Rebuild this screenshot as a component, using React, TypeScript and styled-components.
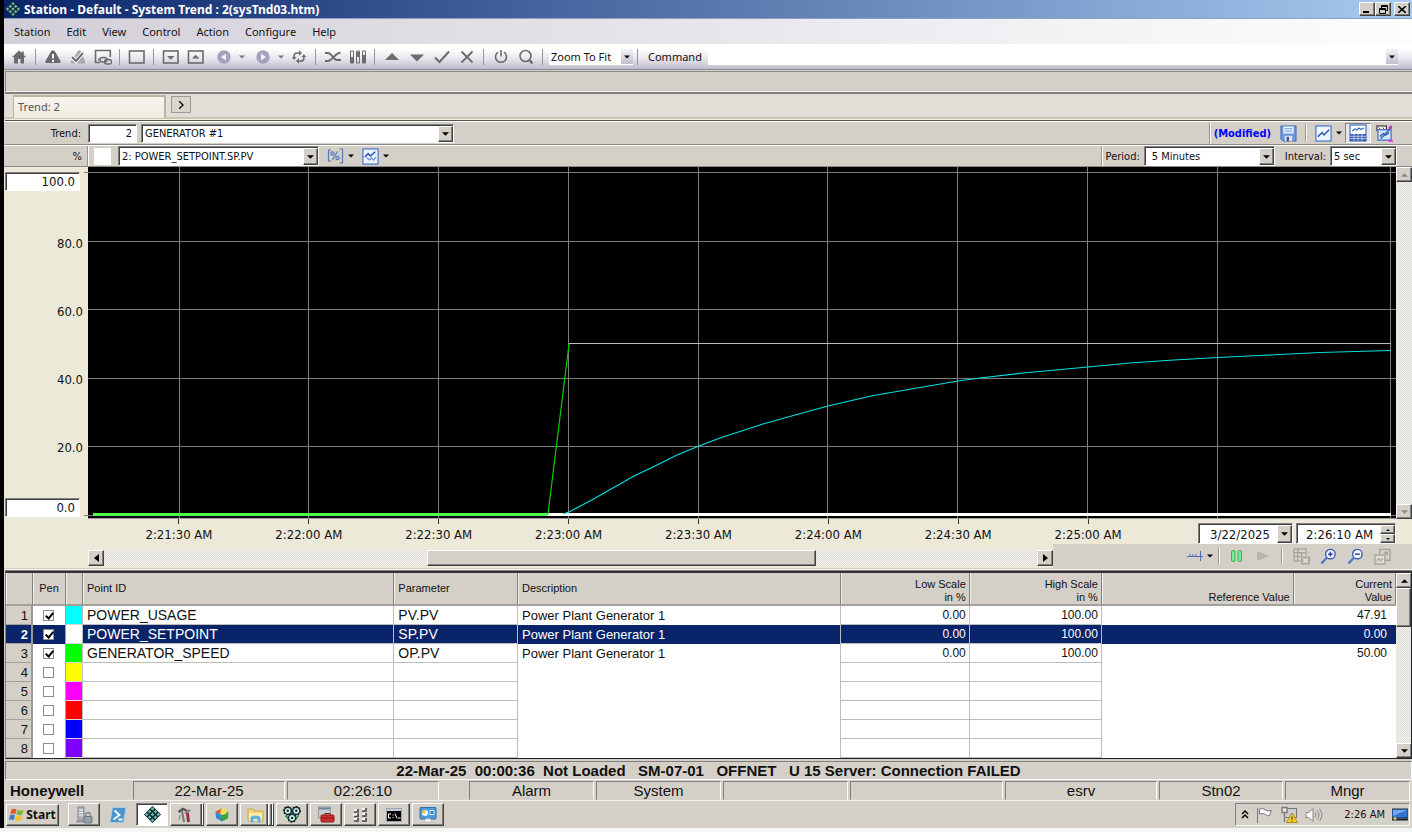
import React from "react";
import styled, { createGlobalStyle, css } from "styled-components";

const UI = `"DejaVu Sans Condensed", "DejaVu Sans", sans-serif`;
const MENU = `"Noto Sans", "Open Sans", sans-serif`;
const GRID = `"Liberation Sans", Arial, sans-serif`;
const FACE = "#d4d0c8";
const CREAM = "#ece9d8";
const NAVY = "#0a246a";

const GlobalStyle = createGlobalStyle`
  * { box-sizing: border-box; }
  body { margin: 0; background: #f6f6f6; color: #111; font: 11px ${UI}; }
  button, input, select { font: inherit; color: inherit; margin: 0; padding: 0; border-radius: 0; }
  button { border: 0; background: none; display: inline-flex; align-items: center; justify-content: center; }
  svg { display: block; flex: none; }
`;

const raised = css`
  background: ${FACE};
  border: 1px solid;
  border-color: #fff #404040 #404040 #fff;
  box-shadow: inset -1px -1px 0 #808080;
`;
const sunken = css`
  background: #fff;
  border: 1px solid;
  border-color: #808080 #fff #fff #808080;
  box-shadow: inset 1px 1px 0 #404040;
`;
const dither = css`
  background: repeating-conic-gradient(#dedad4 0% 25%, #f4f2ee 0% 50%) 0 0 / 2px 2px;
`;

const Screen = styled.div`
  min-height: 100vh;
  border-bottom: 4px solid #f6f6f6;
  display: flex;
  background: #000;
`;
const Frame = styled.div`
  flex: 1;
  min-width: 0;
  margin-left: 4px;
  display: flex;
  flex-direction: column;
  background: ${FACE};
`;

const TitleBar = styled.header`
  height: 19px;
  display: flex;
  align-items: center;
  gap: 3px;
  padding: 0 2px 0 1px;
  background: linear-gradient(90deg, #0a246a, #a6caf0);
  border-bottom: 1px solid #8f9fc4;
  color: #fff;
`;
const Title = styled.h1`
  margin: 0;
  flex: 1;
  font: bold 12px ${MENU};
`;
const WinButton = styled.button<{ $joined?: boolean }>`
  ${raised}
  width: 16px;
  height: 14px;
  margin-left: ${(p) => (p.$joined ? "-3px" : "0")};
`;

const MenuBar = styled.nav`
  height: 25px;
  display: flex;
  align-items: center;
  gap: 16px;
  padding: 0 10px;
  background: linear-gradient(90deg, #d3cfd9, #fdfdfe);
  font: 11px ${MENU};
`;

const ToolBar = styled.div`
  height: 26px;
  display: flex;
  align-items: center;
  padding: 0 14px 0 2px;
  background: linear-gradient(#fff 20%, #e6e4ec 60%, #bfbbcb);
  border-bottom: 1px solid #8a8797;
  font: 11px ${MENU};
`;
const ToolButton = styled.button`
  width: 25px;
  height: 22px;
  color: #6b6b6e;
`;
const SplitButton = styled(ToolButton)`
  width: 39px;
  gap: 8px;
  padding-left: 7px;
`;
const ToolSep = styled.span`
  width: 9px;
  height: 16px;
  background: linear-gradient(#96939e, #96939e) center / 1px 100% no-repeat;
`;
const ZoomSelect = styled.span`
  display: flex;
  align-items: center;
  width: 84px;
  height: 16px;
  margin-left: 2px;
  background: #fff;
`;
const SoftArrow = styled.span`
  display: flex;
  align-items: center;
  justify-content: center;
  flex: none;
  width: 12px;
  height: 15px;
  background: linear-gradient(#f4f3f6, #c2becb);
`;
const BareSelect = styled.select<{ $pad?: number }>`
  appearance: none;
  border: 0;
  background: transparent;
  flex: 1;
  min-width: 0;
  height: 100%;
  padding-left: ${(p) => p.$pad ?? 2}px;
`;
const CommandLabel = styled.label`
  margin: 0 6px 0 6px;
`;
const CommandBox = styled.span`
  flex: 1;
  display: flex;
  align-items: center;
  height: 16px;
  background: #fff;
  input { flex: 1; min-width: 0; border: 0; background: transparent; height: 100%; }
`;

const MessageZone = styled.div`
  height: 21px;
  margin: 1px 0 0 1px;
  border: 1px solid #8a8a8a;
  border-right: 0;
  border-bottom: 1px solid #f4f2ee;
`;
const TabStrip = styled.div`
  height: 29px;
  display: flex;
  align-items: center;
  gap: 5px;
  padding: 0 8px;
  margin-left: 1px;
  background: #e1ded7;
  border-top: 2px solid #808080;
  border-bottom: 1px solid #55544f;
  box-shadow: inset 0 -1px 0 #f3f0e2, inset 0 -3px 0 #c9c5b2;
`;
const Tab = styled.button`
  width: 153px;
  height: 23px;
  align-self: flex-end;
  justify-content: flex-start;
  margin-bottom: 2px;
  padding: 0 0 2px 4px;
  border: solid #b9b59f;
  border-width: 2px 2px 0 1px;
  background: linear-gradient(#f7f5ee, #eeebe0);
  color: #555;
  font: 11px ${MENU};
`;
const TabMore = styled.button`
  width: 20px;
  height: 17px;
  margin-bottom: 5px;
  border: 1px solid #9a9a96;
  background: #d9d5cd;
`;

const Bar = styled.div<{ $h: number }>`
  height: ${(p) => p.$h}px;
  display: flex;
  align-items: center;
  border-top: 1px solid #fff;
  border-bottom: 1px solid #8c8a85;
`;
const BarLabel = styled.label<{ $w?: number }>`
  width: ${(p) => (p.$w ? `${p.$w}px` : "auto")};
  text-align: right;
`;
const Sep = styled.span<{ $m?: string }>`
  width: 2px;
  align-self: stretch;
  margin: ${(p) => p.$m ?? "1px 6px"};
  border-left: 1px solid #9a978f;
  border-right: 1px solid #fff;
`;
const Field = styled.input<{ $w: number; $big?: boolean }>`
  ${sunken}
  width: ${(p) => p.$w}px;
  height: 19px;
  padding: 0 4px;
  text-align: right;
  font-size: ${(p) => (p.$big ? 13 : 11)}px;
`;
const Combo = styled.span<{ $w: number; $h?: number }>`
  ${sunken}
  display: flex;
  align-items: center;
  width: ${(p) => p.$w}px;
  height: ${(p) => p.$h ?? 19}px;
  padding: 1px 0 0 1px;
`;
const ArrowBox = styled.span`
  ${raised}
  flex: none;
  display: flex;
  align-items: center;
  justify-content: center;
  width: 15px;
  height: 100%;
`;
const Push = styled.span`
  flex: 1;
`;
const Gap = styled.span<{ $w: number }>`
  flex: none;
  width: ${(p) => p.$w}px;
`;
const Swatch = styled.span`
  width: 17px;
  height: 17px;
  margin: 0 7px 0 5px;
  background: #fff;
`;
const IconButton = styled.button<{ $w?: number; $on?: boolean }>`
  width: ${(p) => p.$w ?? 26}px;
  height: 20px;
  gap: 4px;
  ${(p) =>
    p.$on &&
    css`
      ${dither}
      border: 1px solid;
      border-color: #808080 #fff #fff #808080;
    `}
`;
const Modified = styled.strong`
  margin-right: 4px;
  color: #00f;
`;

const ChartArea = styled.section`
  flex: 1;
  min-height: 352px;
  display: flex;
  background: ${CREAM};
`;
const YAxis = styled.div`
  width: 84px;
  display: flex;
  flex-direction: column;
  padding-left: 1px;
  font-size: 13px;
`;
const YLabel = styled.div`
  flex: 1;
  display: flex;
  align-items: center;
  justify-content: flex-end;
  padding-right: 5px;
`;
const YEnd = styled.div<{ $bottom?: boolean }>`
  height: ${(p) => (p.$bottom ? 37 : 42)}px;
  display: flex;
  padding: ${(p) => (p.$bottom ? "0 0 2px" : "5px 0 0")};
  align-items: ${(p) => (p.$bottom ? "flex-end" : "flex-start")};
`;
const Plot = styled.svg`
  flex: 1;
  min-width: 0;
  height: auto;
  background: #000;
  overflow: visible;
`;
const VScroll = styled.div`
  width: 16px;
  display: flex;
  flex-direction: column;
  justify-content: space-between;
  ${dither}
`;
const ScrollButton = styled.button`
  ${raised}
  width: 16px;
  height: 15px;
  flex: none;
`;

const AxisRow = styled.div`
  height: 25px;
  display: flex;
  background: ${CREAM};
  font-size: 13px;
`;
const TimeLabels = styled.div`
  flex: 1;
  display: flex;
  padding-left: 110px;
`;
const TimeLabel = styled.div`
  flex: 1;
  text-align: center;
  white-space: nowrap;
  &::before {
    content: "";
    display: block;
    width: 1px;
    height: 5px;
    margin: 0 auto 3px;
    background: #333;
  }
`;
const DateTime = styled.div`
  display: flex;
  align-items: flex-end;
  gap: 3px;
  width: 259px;
  padding: 0 16px 0 45px;
`;
const Spinner = styled.span`
  display: flex;
  flex-direction: column;
  height: 100%;
  button { ${raised} width: 15px; flex: 1; min-height: 0; }
`;
const ComboInput = styled.input`
  flex: 1;
  min-width: 0;
  border: 0;
  background: none;
  text-align: right;
  padding-right: 7px;
`;

const ScrollRow = styled.div`
  height: 24px;
  display: flex;
  align-items: stretch;
`;
const HScroll = styled.div`
  flex: 1;
  display: flex;
  align-items: flex-end;
  padding: 0 0 2px 84px;
  background: ${CREAM};
  button { height: 16px; }
`;
const HTrack = styled.div`
  flex: 1;
  height: 16px;
  display: flex;
  ${dither}
`;
const Thumb = styled.span<{ $grow?: number }>`
  ${raised}
  flex: ${(p) => p.$grow ?? 1};
`;
const Space = styled.span<{ $grow: number }>`
  flex: ${(p) => p.$grow};
`;
const ChartTools = styled.div`
  width: 359px;
  display: flex;
  align-items: center;
  justify-content: flex-end;
  padding-right: 16px;
`;

const TablePane = styled.section`
  display: flex;
  border: 1px solid #222;
  border-top: 2px solid #333;
  border-left-color: #808080;
  margin: 3px 0 0 1px;
  height: 188px;
  overflow: hidden;
  background: #fff;
  box-shadow: 0 -1px 0 #808080, 0 -2px 0 #f4f2ee;
`;
const PenTable = styled.table`
  flex: 1;
  min-width: 0;
  table-layout: fixed;
  border-collapse: separate;
  border-spacing: 0;
  font: 12px/15px ${GRID};
  th {
    height: 33px;
    padding: 0 3px 0 4px;
    background: ${FACE};
    border-right: 1px solid #808080;
    border-bottom: 2px solid #a3a19b;
    box-shadow: inset 1px 0 0 #f4f2ee;
    font: 11px/13px ${GRID};
    text-align: left;
  }
  td {
    height: 19px;
    padding: 0 3px 0 4px;
    white-space: nowrap;
  }
`;
const HeadRight = styled.th`
  && { text-align: right; vertical-align: bottom; }
`;
const HeadMid = styled.th`
  && { text-align: center; padding: 0; }
`;
const PenRow = styled.tr<{ $selected?: boolean }>`
  color: ${(p) => (p.$selected ? "#fff" : "#111")};
  background: ${(p) => (p.$selected ? NAVY : "#fff")};
`;
const Cell = styled.td<{ $lined?: boolean; $size?: number; $right?: boolean; $edge?: boolean }>`
  font-size: ${(p) => p.$size ?? 12}px;
  text-align: ${(p) => (p.$right ? "right" : "left")};
  border-right: ${(p) => (p.$edge === false ? "0" : "1px solid #bdbdbd")};
  border-bottom: ${(p) => (p.$lined ? "1px solid #bdbdbd" : "0")};
`;
const LastCell = styled(Cell)`
  && { padding-right: 9px; }
`;
const RowHead = styled.td<{ $selected?: boolean }>`
  && { padding-right: 3px; }
  text-align: right;
  font-size: 13px;
  background: ${(p) => (p.$selected ? NAVY : FACE)};
  border-right: 2px solid #9a9890;
  border-bottom: 1px solid #a3a19b;
  font-weight: ${(p) => (p.$selected ? "bold" : "normal")};
`;
const CheckCell = styled.td`
  && { padding: 0 0 0 10px; line-height: 0; }
  border-right: 1px solid #a3a19b;
`;
const ColorCell = styled.td<{ $c: string }>`
  background: ${(p) => p.$c};
  border-right: 1px solid #bdbdbd;
  border-bottom: 1px solid #d8d8d8;
`;
const Tick = styled.input`
  appearance: none;
  width: 11px;
  height: 11px;
  border: 1px solid #8c8c8c;
  background: #fff;
  display: inline-block;
  &:checked::before {
    content: "";
    display: block;
    width: 3px;
    height: 6px;
    margin: 0 0 0 3px;
    border: solid #000;
    border-width: 0 2px 2px 0;
    transform: rotate(40deg);
  }
`;
const TableScroll = styled.div`
  width: 15px;
  display: flex;
  flex-direction: column;
  ${dither}
`;

const MessageLine = styled.div`
  height: 19px;
  margin: 2px 0 0 1px;
  border: 1px solid;
  border-color: #808080 #fff #fff #808080;
  text-align: center;
  white-space: pre;
  overflow: hidden;
  font: bold 15px/17px ${GRID};
`;
const StatusBar = styled.footer`
  height: 21px;
  display: grid;
  grid-template-columns: 129fr 154fr 154fr 28fr 127fr 127fr 127fr 155fr 154fr 126fr 127fr;
  align-items: center;
  border-bottom: 1px solid #f4f2ee;
  font: 15px/18px ${GRID};
`;
const StatusCell = styled.div`
  height: 19px;
  margin-right: 2px;
  text-align: center;
  border: 1px solid;
  border-color: #808080 #fff ${FACE} #808080;
`;
const Brand = styled.strong`
  padding-left: 6px;
  font: 900 15px ${GRID};
`;

const TaskBar = styled.div`
  height: 27px;
  display: flex;
  align-items: center;
  gap: 2px;
  padding: 0 2px;
`;
const StartButton = styled.button`
  ${raised}
  width: 53px;
  height: 22px;
  gap: 1px;
  margin-right: 7px;
  font: bold 12px ${MENU};
`;
const TaskButton = styled.button<{ $on?: boolean; $flat?: boolean }>`
  width: 32px;
  height: 23px;
  ${(p) => (p.$flat ? "" : p.$on ? sunken : raised)}
`;
const StackButton = styled(TaskButton)`
  width: 34px;
  justify-content: space-between;
  padding-left: 6px;
`;
const StackEdge = styled.span`
  display: flex;
  height: 100%;
  i {
    width: 4px;
    height: 100%;
    border-right: 1px solid #fff;
    box-shadow: inset -1px 0 0 #404040, inset -2px 0 0 #808080;
  }
`;
const Tray = styled.div`
  display: flex;
  align-items: center;
  gap: 7px;
  width: 175px;
  height: 23px;
  margin-left: auto;
  padding: 0 1px 0 5px;
  border: 1px solid;
  border-color: #808080 #fff #fff #808080;
  white-space: nowrap;
`;

const Down = ({ s = 7, c = "#000" }: { s?: number; c?: string }) => (
  <svg width={s} height={4} viewBox="0 0 8 4" aria-hidden>
    <path d="M0 0h8L4 4z" fill={c} />
  </svg>
);
const Up = ({ s = 7, c = "#000" }: { s?: number; c?: string }) => (
  <svg width={s} height={4} viewBox="0 0 8 4" aria-hidden>
    <path d="M0 4h8L4 0z" fill={c} />
  </svg>
);
const Ico = ({ children, s = 18 }: { children: React.ReactNode; s?: number }) => (
  <svg width={s} height={s} viewBox="0 0 18 18" fill="none" stroke="currentColor" strokeWidth={1.6} aria-hidden>
    {children}
  </svg>
);

const HomeIcon = (
  <Ico>
    <path d="M9 2.5 2 9.2h2V15.500h4v-4.500h2.500V15.500H14V9.200h2.200L13.800 7V3.500h-2v1.600z" fill="currentColor" stroke="none" />
  </Ico>
);
const AlarmIcon = (
  <Ico>
    <path d="M7 3.500C7 2 11 2 11 3.500L16.500 13v2h-15v-2z" fill="currentColor" stroke="none" />
    <path d="M9 6v4.500M9 12v2" stroke="#fff" strokeWidth={2} />
  </Ico>
);
const AckIcon = (
  <Ico>
    <path d="M8 4.500C8 2 12 2 12 4l4 9v2.500H2V13z" fill="#a9a8ad" stroke="none" />
    <path d="m3 9 4 4 7-8" stroke="#fff" strokeWidth={4} />
    <path d="m3 9 4 4 7-8" strokeWidth={2} />
  </Ico>
);
const LinkIcon = (
  <Ico>
    <path d="M16.300 9V2.500H1.500v12H6M4 11.500h2" />
    <rect x="6" y="9.500" width="7" height="4.500" rx="2.200" strokeWidth={1.300} />
    <rect x="10.500" y="11.500" width="7" height="4.500" rx="2.200" strokeWidth={1.300} />
  </Ico>
);
const SquareIcon = (
  <Ico>
    <rect x="1.500" y="3" width="14.500" height="12" />
  </Ico>
);
const BoxDown = (
  <Ico>
    <rect x="1.500" y="3" width="14.500" height="12" />
    <path d="M5 8h7.500L8.700 11.800z" fill="currentColor" stroke="none" />
  </Ico>
);
const BoxUp = (
  <Ico>
    <rect x="1.500" y="3" width="14.500" height="12" />
    <path d="M5 10.500h7.500L8.700 6.700z" fill="currentColor" stroke="none" />
  </Ico>
);
const Circle = ({ flip }: { flip?: boolean }) => (
  <svg width={14} height={14} viewBox="0 0 14 14" aria-hidden>
    <circle cx="7" cy="7" r="6.700" fill="#a7a0bd" />
    <path d={flip ? "M5 3.500v7L10 7z" : "M9 3.500v7L4 7z"} fill="#f3f1f8" />
  </svg>
);
const RefreshIcon = (
  <Ico s={16}>
    <path d="M3.500 9.500V8Q3.500 4.500 7 4.500h2.500M14.500 8.500V10q0 3.500-3.500 3.500H8.500" strokeWidth={1.800} />
    <path d="M.8 9h5.400L3.500 12.500zM11.800 9h5.400L14.500 5.500zM9 1.500v6L12.500 4.500zM9 10.500v6L5.500 13.500z" fill="currentColor" stroke="none" />
  </Ico>
);
const TrendIcon = (
  <Ico>
    <path d="M1 5h3c4 0 5 7 9 7h4M1 13h3c4 0 6-7 12.500-8.500" strokeWidth={1.800} />
  </Ico>
);
const BarsIcon = (
  <Ico>
    <path d="M1.500 3h3v12h-3zM7.500 3h3v12h-3zM13.500 3h3v12h-3z" strokeWidth={1} />
    <path d="M3 9v6M9 4v5M15 7v8" strokeWidth={2} />
  </Ico>
);
const TriUp = (
  <Ico>
    <path d="M2 12h14L9 5z" fill="currentColor" stroke="none" />
  </Ico>
);
const TriDown = (
  <Ico>
    <path d="M2 6.500h14l-7 7z" fill="currentColor" stroke="none" />
  </Ico>
);
const CheckIcon = (
  <Ico>
    <path d="m2 9.500 4.500 4.500L16 3.500" strokeWidth={2} />
  </Ico>
);
const CrossIcon = (
  <Ico>
    <path d="m3.500 3.500 11 11M14.500 3.500l-11 11" strokeWidth={1.800} />
  </Ico>
);
const PowerIcon = (
  <Ico>
    <path d="M6 4.200a5.500 5.500 0 1 0 6 0M9 2v6.500" />
  </Ico>
);
const SearchIcon = (
  <Ico>
    <circle cx="8.500" cy="8" r="5.500" />
    <path d="m12.500 12 3 3.500" strokeWidth={2.200} />
  </Ico>
);

const SaveIcon = (
  <Ico s={17}>
    <path d="M1 1h16v16H3l-2-2z" fill="#6f98de" stroke="#3c66b8" strokeWidth={1} />
    <path d="M3.500 1.500h11v7.500h-11z" fill="#e6effc" stroke="none" />
    <path d="M5 4h8M5 6.500h8" stroke="#6a8fd4" strokeWidth={1} />
    <path d="M5 11.500h8V17H5z" fill="#dbe3f2" stroke="none" />
    <path d="M7 12.500h2.500V17H7z" fill="#3c50a8" stroke="none" />
  </Ico>
);
const ChartIcon = ({ dual }: { dual?: boolean }) => (
  <Ico s={17}>
    <rect x="1" y="1" width="16" height="16" fill="#eef4ff" stroke="#3f6fc4" strokeWidth={1.200} />
    <path d={dual ? "M3 9.500 6.500 6 9 8.500 14 4" : "M3 12.500 7.500 8 9.500 10.500 15 5"} stroke="#2a55b0" strokeWidth={1.600} />
    {dual && <path d="M5 10.500 8 12.500l2-2 2 2.500 3-3.500" stroke="#6f9ae0" strokeWidth={1.400} />}
  </Ico>
);
const ChartTableIcon = (
  <Ico s={18}>
    <rect x="1" y="1" width="16" height="16" fill="#fff" stroke="#3f6fc4" strokeWidth={1.200} />
    <path d="M3 7l3-2 2 1 2-2 2 1.500L15 4" stroke="#3f66b4" strokeWidth={1.200} />
    <path d="M1 10h16v7H1z" fill="#3a5fb0" stroke="none" />
    <path d="M1 12.300h16M1 14.600h16M5 10v7M9 10v7M13 10v7" stroke="#c9d8f5" strokeWidth={0.800} />
  </Ico>
);
const EditChartIcon = (
  <Ico s={17}>
    <rect x="1" y="1" width="10" height="5" fill="#fff" stroke="#333" strokeWidth={1.200} />
    <path d="M3 2.500 5 5M7 2.500 9 5" stroke="#333" strokeWidth={1} />
    <rect x="2" y="5" width="14" height="11" fill="#d4e4fb" stroke="#3f6fc4" strokeWidth={1.300} />
    <path d="m4 12 4-3 2 2 4-3M5 14.500 16 3" stroke="#3a63b8" strokeWidth={1.500} />
    <path d="m14 4 2.500-3" stroke="#c020b0" strokeWidth={2.400} />
    <path d="M13 17h5" stroke="#f0f" strokeWidth={1.400} />
  </Ico>
);
const PercentIcon = (
  <svg width={17} height={16} viewBox="0 0 17 16" fill="none" stroke="#5578b8" strokeWidth={1.200} aria-hidden>
    <path d="M4 2H1.500v11H4M12.500 1h3v14h-3M10.500 3.500l-5 8.500" />
    <circle cx="5.500" cy="5.500" r="1.600" />
    <circle cx="10.500" cy="10" r="1.600" />
  </svg>
);
const MagnifyIcon = ({ plus }: { plus?: boolean }) => (
  <Ico s={17}>
    <circle cx="11" cy="6.500" r="5" fill="#f2f7ff" stroke="#2c55a8" strokeWidth={1.400} />
    <path d={plus ? "M8.500 6.500h5M11 4v5" : "M8.500 6.500h5"} stroke="#2c44a0" />
    <path d="m7 10.500-5.500 6" stroke="#4a78c8" strokeWidth={2.400} />
  </Ico>
);
const GreyTableIcon = (
  <Ico s={17}>
    <path d="M1 1h13v7M1 1v13h7M1 5h13M1 9h7M5 1v13M9 5v4" stroke="#a5a29c" strokeWidth={1.300} />
    <rect x="9" y="9.500" width="8.500" height="7.500" fill="#b5b2ac" stroke="#a5a29c" strokeWidth={1} />
    <path d="m11 11 4.500 4.500M15.500 11 11 15.500" stroke="#eee" strokeWidth={1.200} />
  </Ico>
);
const GreyCopyIcon = (
  <Ico s={17}>
    <path d="M6 7V1.500h11V13h-5M9.500 8.500l4.500-4M11 4.500h3.200V8" stroke="#a5a29c" strokeWidth={1.400} />
    <rect x="1" y="7.500" width="10.500" height="9.500" fill="#dedbd5" stroke="#a5a29c" strokeWidth={1.400} />
    <path d="m3 13.500 2-2 2 2 2.500-2.500" stroke="#a5a29c" strokeWidth={1.200} />
  </Ico>
);

const StationGlyph = ({ s = 16 }: { s?: number }) => (
  <svg width={s} height={s} viewBox="0 0 16 16" aria-hidden>
    <path d="M8 0 16 8 8 16 0 8z" fill="#0c1f22" />
    <path
      d="M8 .8 9.900 2.700 8 4.600 6.100 2.700zM5.300 3.500 7.200 5.400 5.300 7.300 3.400 5.400zM10.700 3.500l1.900 1.900-1.900 1.900-1.900-1.900zM8 6.100 9.900 8 8 9.900 6.100 8zM2.600 6.100 4.500 8 2.600 9.900.7 8zM13.400 6.100 15.300 8l-1.900 1.900L11.500 8zM5.300 8.700l1.900 1.900-1.900 1.900-1.900-1.900zM10.700 8.700l1.900 1.900-1.900 1.900-1.900-1.900zM8 11.400l1.900 1.900L8 15.200l-1.900-1.900z"
      fill="#6fb5b0"
      stroke="#123a3a"
      strokeWidth={0.400}
    />
  </svg>
);
const WindowsLogo = (
  <svg width={16} height={16} viewBox="0 0 16 16" aria-hidden>
    <path d="M2.500 2.500Q5 1 7.500 2.500L6.300 7.200Q4 6 1.300 7.200z" fill="#e8542c" />
    <path d="M8.500 3Q11 4.500 14.500 3L13.300 7.500Q10.500 9 7.400 7.600z" fill="#7cb83a" />
    <path d="M1 8.200Q3.500 7 6 8.200L4.800 13Q2.500 11.800 0 13z" fill="#3d7fd6" />
    <path d="M7 8.700Q10 10 13 8.500L11.800 13.200Q9 14.500 5.900 13.300z" fill="#f6bf26" />
  </svg>
);
const ServerIcon = (
  <svg width={18} height={18} viewBox="0 0 18 18" aria-hidden>
    <path d="M3 1h6v13H3z" fill="#aeb6bd" stroke="#7b858e" />
    <path d="M4 4h4M4 6.500h4M4 9h4" stroke="#f5f8fa" strokeWidth={1.200} />
    <path d="M1 15.500h9" stroke="#8b949c" strokeWidth={2} />
    <rect x="9" y="10.500" width="8" height="6.500" rx="1" fill="#98a0a8" stroke="#6c757e" />
    <path d="M10.800 10V8.500a2.200 2.200 0 0 1 4.400 0V10" fill="none" stroke="#7b858e" strokeWidth={1.300} />
  </svg>
);
const ShellIcon = (
  <svg width={18} height={18} viewBox="0 0 18 18" aria-hidden>
    <path d="M3.500 1.500H17L14.500 16.500H1z" fill="#4a94cc" stroke="#a9cde8" />
    <path d="m5.500 4.500 5 4.500L4.500 13.500M9.500 13.500h4" fill="none" stroke="#fff" strokeWidth={1.800} />
  </svg>
);
const ToolsIcon = (
  <svg width={15} height={16} viewBox="0 0 15 16" fill="none" aria-hidden>
    <path d="M1.500 5 6 2l4 2" stroke="#555" strokeWidth={2.400} />
    <path d="M5 4 7 15" stroke="#777" strokeWidth={2} />
    <path d="M8 6.500 13 3" stroke="#888" strokeWidth={2.600} />
    <path d="m10.500 6 1 9" stroke="#a3224b" strokeWidth={2.800} />
    <path d="m3 8-1 5" stroke="#999" strokeWidth={1.600} />
  </svg>
);
const CubeIcon = (
  <svg width={16} height={16} viewBox="0 0 16 16" aria-hidden>
    <path d="M1.500 4.500 8 1.500l6.500 3L8 8z" fill="#e9c53c" />
    <path d="M1.500 5 8 8v6.500L2 11z" fill="#2c8ad0" />
    <path d="M14.500 5 8 8v6.500l6-3z" fill="#3fa33c" />
    <path d="M1.500 4.500 8 1.500v4.500L4 6.500z" fill="#d9553a" />
    <circle cx="9.500" cy="4.500" r="3" fill="#f6e05c" />
  </svg>
);
const FolderIcon = (
  <svg width={17} height={16} viewBox="0 0 17 16" aria-hidden>
    <path d="M1 2h5l1 2h9v10H1z" fill="#f0d777" stroke="#c9a845" />
    <path d="M2 6h13v8H2z" fill="#f9ecae" />
    <path d="M3.500 15.500V11q0-2.500 5-2.500t5 2.500v4.500h-3V12h-4v3.500z" fill="#5fb0dd" />
  </svg>
);
const GearsIcon = (
  <svg width={18} height={17} viewBox="0 0 18 17" aria-hidden>
    <g fill="#c9ecea" stroke="#14282c" strokeWidth={1.400}>
      <circle cx="4.800" cy="4.800" r="3.600" />
      <circle cx="13.200" cy="4.800" r="3.600" />
      <circle cx="9" cy="12" r="3.600" />
    </g>
    <g fill="none" stroke="#14282c" strokeWidth={1.600} strokeDasharray="1.500 1.500">
      <circle cx="4.800" cy="4.800" r="4" />
      <circle cx="13.200" cy="4.800" r="4" />
      <circle cx="9" cy="12" r="4" />
    </g>
    <path d="m2.500 9.500 2.500 3M15.500 9.500l-2.500 3" stroke="#1d8c50" strokeWidth={1.800} />
    <g fill="#14282c">
      <circle cx="4.800" cy="4.800" r="1.200" />
      <circle cx="13.200" cy="4.800" r="1.200" />
      <circle cx="9" cy="12" r="1.200" />
    </g>
  </svg>
);
const ToolboxIcon = (
  <svg width={18} height={17} viewBox="0 0 18 17" aria-hidden>
    <rect x="1.500" y="1" width="12" height="11" fill="#c5ccd4" stroke="#8d969f" />
    <path d="M2 2.500h11" stroke="#72869c" strokeWidth={2} />
    <rect x="4" y="9" width="13" height="7" rx="1" fill="#cf2f2f" stroke="#8c1a1a" />
    <path d="M8 9V7.500h5V9M4 12h13" fill="none" stroke="#8c1a1a" />
  </svg>
);
const BlocksIcon = (
  <svg width={16} height={14} viewBox="0 0 16 14" aria-hidden>
    <path d="M2 1h4v3H2zM10 0h4v3h-4zM1 5.500h4v3H1zM10 5h4v3h-4zM2 10h4v3H2zM10 10h4v3h-4z" fill="#f4f4f4" />
    <path d="M6 1v3H2M14 0v3h-4M6 5.500v3H2M14 5v3h-4M6 10v3H2M14 10v3h-4" fill="none" stroke="#444" strokeWidth={1.600} />
  </svg>
);
const ConsoleIcon = (
  <svg width={16} height={14} viewBox="0 0 16 14" fill="none" aria-hidden>
    <rect x="0.500" y="0.500" width="15" height="13" fill="#000" stroke="#9aa4b0" />
    <path d="M1 2h14" stroke="#c5ced8" strokeWidth={2} />
    <path d="M5 6H2.500v4H5M7 6.500v1M7 9v1M9 5.500l2 5M12 10h2.500" stroke="#fff" />
  </svg>
);
const PanelIcon = (
  <svg width={18} height={17} viewBox="0 0 18 17" aria-hidden>
    <rect x="1" y="1.500" width="16" height="11.500" rx="1" fill="#4c9edb" stroke="#2c6fa8" />
    <circle cx="6" cy="7" r="3" fill="#eef6fc" />
    <path d="M6 4v3H3a3 3 0 0 1 3-3z" fill="#f0b83c" />
    <path d="M11 4.500h4v4h-4z" fill="#2d78c0" stroke="#dff0ff" />
    <ellipse cx="9" cy="14.500" rx="3.500" ry="2" fill="#eceff2" stroke="#a3abb3" strokeWidth={0.600} />
  </svg>
);

const plotX = [92, 221, 351, 481, 611, 740, 870, 1000, 1130, 1303];
const plotY = [5, 74, 142, 211, 279, 348];
const usage =
  "475,347 481,345 502,334 546,309 567,299 589,288 611,279 632,271 675,257 718,245 740,239 783,229 826,221.500 870,214 892,211 935,206 1000,200 1042,196 1086,193 1130,190.500 1172,188.500 1232,185.500 1303,183.500";

const times = ["2:21:30 AM", "2:22:00 AM", "2:22:30 AM", "2:23:00 AM", "2:23:30 AM", "2:24:00 AM", "2:24:30 AM", "2:25:00 AM"];

type Pen = { color: string; on?: boolean; id?: string; param?: string; value?: string; selected?: boolean };
const pens: Pen[] = [
  { color: "#00ffff", on: true, id: "POWER_USAGE", param: "PV.PV", value: "47.91" },
  { color: "#ffffff", on: true, id: "POWER_SETPOINT", param: "SP.PV", value: "0.00", selected: true },
  { color: "#00ff00", on: true, id: "GENERATOR_SPEED", param: "OP.PV", value: "50.00" },
  { color: "#ffff00" },
  { color: "#ff00ff" },
  { color: "#ff0000" },
  { color: "#0000ff" },
  { color: "#8000ff" },
];

type SelectProps = { id?: string; w: number; h?: number; pad?: number; label?: string; value: string };
const Select = ({ id, w, h, pad, label, value }: SelectProps) => (
  <Combo $w={w} $h={h}>
    <BareSelect id={id} aria-label={label} $pad={pad}>
      <option>{value}</option>
    </BareSelect>
    <ArrowBox>
      <Down />
    </ArrowBox>
  </Combo>
);

export default function App() {
  return (
    <Screen>
      <GlobalStyle />
      <Frame>
        <TitleBar>
          <StationGlyph />
          <Title>Station - Default - System Trend : 2(sysTnd03.htm)</Title>
          <WinButton aria-label="Minimize">
            <svg width={8} height={8} viewBox="0 0 8 8"><path d="M0 7h6" stroke="#000" strokeWidth={2} /></svg>
          </WinButton>
          <WinButton $joined aria-label="Restore">
            <svg width={9} height={9} viewBox="0 0 9 9" fill="none" stroke="#000">
              <path d="M2.500 3V.5h6v5H6.500M2.500 1.500h6M.5 3.500h6v5h-6zM.5 4.500h6" />
            </svg>
          </WinButton>
          <WinButton aria-label="Close">
            <svg width={8} height={7} viewBox="0 0 8 7"><path d="m0 0 8 7M8 0 0 7" stroke="#000" strokeWidth={1.600} /></svg>
          </WinButton>
        </TitleBar>
        <MenuBar>
          {["Station", "Edit", "View", "Control", "Action", "Configure", "Help"].map((m) => (
            <button key={m}>{m}</button>
          ))}
        </MenuBar>
        <ToolBar>
          <ToolButton aria-label="Home">{HomeIcon}</ToolButton>
          <ToolSep />
          <ToolButton aria-label="Alarms">{AlarmIcon}</ToolButton>
          <ToolButton aria-label="Acknowledge">{AckIcon}</ToolButton>
          <ToolButton aria-label="Associated display">{LinkIcon}</ToolButton>
          <ToolSep />
          <ToolButton aria-label="Display">{SquareIcon}</ToolButton>
          <ToolSep />
          <ToolButton aria-label="Page down">{BoxDown}</ToolButton>
          <ToolButton aria-label="Page up">{BoxUp}</ToolButton>
          <SplitButton aria-label="Back">
            <Circle />
            <Down s={6} c="#77757c" />
          </SplitButton>
          <SplitButton aria-label="Forward">
            <Circle flip />
            <Down s={6} c="#77757c" />
          </SplitButton>
          <ToolButton aria-label="Refresh">{RefreshIcon}</ToolButton>
          <ToolSep />
          <ToolButton aria-label="Trend">{TrendIcon}</ToolButton>
          <ToolButton aria-label="Groups">{BarsIcon}</ToolButton>
          <ToolSep />
          <ToolButton aria-label="Raise">{TriUp}</ToolButton>
          <ToolButton aria-label="Lower">{TriDown}</ToolButton>
          <ToolButton aria-label="Enter">{CheckIcon}</ToolButton>
          <ToolButton aria-label="Cancel">{CrossIcon}</ToolButton>
          <ToolSep />
          <ToolButton aria-label="Power">{PowerIcon}</ToolButton>
          <ToolButton aria-label="Search">{SearchIcon}</ToolButton>
          <ToolSep />
          <ZoomSelect>
            <BareSelect aria-label="Zoom">
              <option>Zoom To Fit</option>
            </BareSelect>
            <SoftArrow>
              <Down s={6} />
            </SoftArrow>
          </ZoomSelect>
          <ToolSep />
          <CommandLabel htmlFor="command">Command</CommandLabel>
          <CommandBox>
            <input id="command" />
            <SoftArrow>
              <Down s={6} />
            </SoftArrow>
          </CommandBox>
        </ToolBar>
        <MessageZone />
        <TabStrip>
          <Tab>Trend: 2</Tab>
          <TabMore aria-label="More tabs">
            <svg width={5} height={8} viewBox="0 0 5 8"><path d="m0 0 4 4-4 4" fill="none" stroke="#111" strokeWidth={1.400} /></svg>
          </TabMore>
        </TabStrip>

        <Bar $h={24}>
          <BarLabel $w={77} htmlFor="trend">Trend:</BarLabel>
          <Gap $w={7} />
          <Field id="trend" $w={49} defaultValue="2" />
          <Gap $w={4} />
          <Select w={313} label="Trend name" value="GENERATOR #1" />
          <Push />
          <Sep $m="0 3px" />
          <Modified>(Modified)</Modified>
          <IconButton aria-label="Save">{SaveIcon}</IconButton>
          <Sep $m="2px 4px" />
          <IconButton $w={34} aria-label="Trend type">
            <ChartIcon />
            <Down s={6} />
          </IconButton>
          <IconButton $on aria-label="Show table">{ChartTableIcon}</IconButton>
          <IconButton aria-label="Configure trend">{EditChartIcon}</IconButton>
          <Gap $w={15} />
        </Bar>
        <Bar $h={22}>
          <BarLabel as="span" $w={78}>%</BarLabel>
          <Sep $m="0 0 0 5px" />
          <Swatch />
          <Select w={201} h={20} label="Pen" value="2: POWER_SETPOINT.SP.PV" />
          <IconButton $w={42} aria-label="Units">
            {PercentIcon}
            <Down s={6} />
          </IconButton>
          <IconButton $w={28} aria-label="Trace style">
            <ChartIcon dual />
            <Down s={6} />
          </IconButton>
          <Push />
          <Sep $m="0 3px 0 0" />
          <BarLabel htmlFor="period">Period:</BarLabel>
          <Gap $w={4} />
          <Select id="period" w={131} h={20} pad={6} value="5 Minutes" />
          <Gap $w={10} />
          <BarLabel htmlFor="interval">Interval:</BarLabel>
          <Gap $w={4} />
          <Select id="interval" w={67} h={20} value="5 sec" />
          <Gap $w={15} />
        </Bar>

        <ChartArea>
          <YAxis>
            <YEnd>
              <Field $w={75} $big aria-label="High limit" defaultValue="100.0" />
            </YEnd>
            {["80.0", "60.0", "40.0", "20.0"].map((v) => (
              <YLabel key={v}>{v}</YLabel>
            ))}
            <YEnd $bottom>
              <Field $w={75} $big aria-label="Low limit" defaultValue="0.0" />
            </YEnd>
          </YAxis>
          <Plot viewBox="0 0 1308 352" preserveAspectRatio="none" fill="none" role="img" aria-label="Trend chart">
            <g stroke="#7d7d7d" shapeRendering="crispEdges">
              {plotX.map((x) => (
                <path key={x} d={`M${x - 0.5} 0V352`} />
              ))}
              {plotY.map((y) => (
                <path key={y} d={`M${y === 5 || y === 348 ? -4 : 0} ${y + 0.5}H1308`} />
              ))}
              <path d="M0 351.500H1308" stroke="#999" />
              <path d="M481 176.500H1303" stroke="#b5c0b5" />
            </g>
            <path d="M460 347.500H1303" stroke="#fff" strokeWidth={3} />
            <path d="M5 347.500H460" stroke="#4dff4d" strokeWidth={3} />
            <polyline points="460,347 481,177" stroke="#00d000" strokeWidth={1.200} />
            <polyline points={usage} stroke="#00e0e0" strokeWidth={1.200} />
          </Plot>
          <VScroll>
            <ScrollButton aria-label="Scroll up"><Up c="#8c8a85" /></ScrollButton>
            <ScrollButton aria-label="Scroll down"><Down c="#8c8a85" /></ScrollButton>
          </VScroll>
        </ChartArea>
        <AxisRow>
          <TimeLabels>
            {times.map((t) => (
              <TimeLabel key={t}>{t}</TimeLabel>
            ))}
          </TimeLabels>
          <DateTime>
            <Combo $w={95} $h={21}>
              <ComboInput aria-label="Date" defaultValue="3/22/2025" />
              <ArrowBox><Down /></ArrowBox>
            </Combo>
            <Combo $w={100} $h={21}>
              <ComboInput aria-label="Time" defaultValue="2:26:10 AM" />
              <Spinner>
                <button aria-label="Later"><Up s={4} /></button>
                <button aria-label="Earlier"><Down s={4} /></button>
              </Spinner>
            </Combo>
          </DateTime>
        </AxisRow>
        <ScrollRow>
          <HScroll>
            <ScrollButton aria-label="Scroll left">
              <svg width={5} height={8} viewBox="0 0 5 8"><path d="M5 0v8L0 4z" /></svg>
            </ScrollButton>
            <HTrack>
              <Space $grow={324} />
              <Thumb $grow={388} />
              <Space $grow={221} />
            </HTrack>
            <ScrollButton aria-label="Scroll right">
              <svg width={5} height={8} viewBox="0 0 5 8"><path d="M0 0v8l5-4z" /></svg>
            </ScrollButton>
          </HScroll>
          <ChartTools>
            <IconButton $w={28} aria-label="Cursor">
              <svg width={16} height={12} viewBox="0 0 16 12" stroke="#4a6fb8"><path d="M0 6.500h16M13.500 1v10M3 4v3M6 4v3M9 4v3" /></svg>
              <Down s={6} />
            </IconButton>
            <Sep $m="4px 4px" />
            <IconButton aria-label="Pause">
              <svg width={12} height={12} viewBox="0 0 12 12" fill="#7ce89a" stroke="#28b850">
                <rect x="0.500" y="0.500" width="3.500" height="11" rx="1.500" />
                <rect x="7" y="0.500" width="3.500" height="11" rx="1.500" />
              </svg>
            </IconButton>
            <IconButton aria-label="Play">
              <svg width={12} height={10} viewBox="0 0 12 10"><path d="M0 0v10l12-5z" fill="#b8b5af" /></svg>
            </IconButton>
            <Sep $m="4px 5px" />
            <IconButton aria-label="Clear">{GreyTableIcon}</IconButton>
            <IconButton $w={28} aria-label="Zoom in"><MagnifyIcon plus /></IconButton>
            <IconButton aria-label="Zoom out"><MagnifyIcon /></IconButton>
            <IconButton $w={28} aria-label="Restore view">{GreyCopyIcon}</IconButton>
          </ChartTools>
        </ScrollRow>

        <TablePane>
          <PenTable>
            <colgroup>
              <col width="27" />
              <col width="33" />
              <col width="17" />
              <col width="22.400%" />
              <col width="8.900%" />
              <col width="23.200%" />
              <col width="9.300%" />
              <col width="9.500%" />
              <col width="13.800%" />
              <col />
            </colgroup>
            <thead>
              <tr>
                <th />
                <HeadMid>Pen</HeadMid>
                <th />
                <th>Point ID</th>
                <th>Parameter</th>
                <th>Description</th>
                <HeadRight>Low Scale<br />in %</HeadRight>
                <HeadRight>High Scale<br />in %</HeadRight>
                <HeadRight>Reference Value</HeadRight>
                <HeadRight>Current<br />Value</HeadRight>
              </tr>
            </thead>
            <tbody>
              {pens.map((p, i) => (
                <PenRow key={p.color} $selected={p.selected}>
                  <RowHead $selected={p.selected}>{i + 1}</RowHead>
                  <CheckCell>
                    <Tick type="checkbox" aria-label={`Pen ${i + 1}`} defaultChecked={p.on} />
                  </CheckCell>
                  <ColorCell $c={p.color} />
                  <Cell $lined $size={14}>{p.id}</Cell>
                  <Cell $lined $size={14}>{p.param}</Cell>
                  <Cell $size={13}>{p.id && "Power Plant Generator 1"}</Cell>
                  <Cell $lined $right>{p.id && "0.00"}</Cell>
                  <Cell $lined $right>{p.id && "100.00"}</Cell>
                  <Cell $edge={false} />
                  <LastCell $right $edge={false}>{p.value}</LastCell>
                </PenRow>
              ))}
            </tbody>
          </PenTable>
          <TableScroll>
            <ScrollButton aria-label="Rows up"><Up /></ScrollButton>
            <Thumb $grow={38} />
            <Space $grow={118} />
            <ScrollButton aria-label="Rows down"><Down /></ScrollButton>
          </TableScroll>
        </TablePane>

        <MessageLine>{"22-Mar-25  00:00:36  Not Loaded   SM-07-01   OFFNET   U 15 Server: Connection FAILED"}</MessageLine>
        <StatusBar>
          <Brand>Honeywell</Brand>
          <StatusCell>22-Mar-25</StatusCell>
          <StatusCell>02:26:10</StatusCell>
          <span />
          <StatusCell>Alarm</StatusCell>
          <StatusCell>System</StatusCell>
          <StatusCell />
          <StatusCell />
          <StatusCell>esrv</StatusCell>
          <StatusCell>Stn02</StatusCell>
          <StatusCell>Mngr</StatusCell>
        </StatusBar>
        <TaskBar>
          <StartButton>{WindowsLogo}Start</StartButton>
          <TaskButton aria-label="Server Manager">{ServerIcon}</TaskButton>
          <TaskButton $flat aria-label="PowerShell">{ShellIcon}</TaskButton>
          <TaskButton $on aria-label="Station"><StationGlyph s={17} /></TaskButton>
          <StackButton aria-label="Configuration Studio">
            {ToolsIcon}
            <StackEdge><i /></StackEdge>
          </StackButton>
          <TaskButton aria-label="Builder">{CubeIcon}</TaskButton>
          <StackButton aria-label="Explorer">
            {FolderIcon}
            <StackEdge><i /><i /></StackEdge>
          </StackButton>
          <TaskButton aria-label="Services">{GearsIcon}</TaskButton>
          <TaskButton aria-label="Toolbox">{ToolboxIcon}</TaskButton>
          <TaskButton aria-label="Blocks">{BlocksIcon}</TaskButton>
          <TaskButton aria-label="Command prompt">{ConsoleIcon}</TaskButton>
          <TaskButton aria-label="Control panel">{PanelIcon}</TaskButton>
          <Tray>
            <svg width={8} height={9} viewBox="0 0 8 9" fill="none" stroke="#000" strokeWidth={1.500}><path d="m1 4 3-3 3 3M1 8l3-3 3 3" /></svg>
            <svg width={17} height={16} viewBox="0 0 17 16" fill="#fafafa" stroke="#777"><path d="M1.500 1v15M3.500 2q3-1.500 6 1 3 1.500 6 .5l-2 5q-2 1-4-1-3-2-6-.5z" /></svg>
            <svg width={18} height={17} viewBox="0 0 18 17" stroke="#777">
              <rect x="4.500" y="2.500" width="12" height="9" fill="#c9ccd0" />
              <path d="M2 1.500h5v5H2zM4.500 6.500V16" fill="#e8e8e8" strokeWidth={1.300} />
              <path d="m12 7 5.500 9.500h-11z" fill="#f7ce28" stroke="#b38c10" />
              <path d="M12 10.500v3M12 14.500v1" stroke="#222" />
            </svg>
            <svg width={18} height={14} viewBox="0 0 18 14" fill="#fafafa" stroke="#888"><path d="M1 4.500h3l4-4v13l-4-4H1z" /><path d="M10 4.500q2 2.500 0 5M12 2.500q4 4.500 0 9M14.500 1q5 6 0 12" fill="none" /></svg>
            <Push />
            <span>2:26 AM</span>
            <svg width={16} height={13} viewBox="0 0 16 13"><path d="M0 1h16v9H0z" fill="#2f74d0" stroke="#234" /><path d="M1 2h14L1 8z" fill="#6fa8ec" /><path d="M0 11.500h16" stroke="#123" strokeWidth={2} /><circle cx="3" cy="10.500" r="1.500" fill="#e8c53a" /></svg>
          </Tray>
        </TaskBar>
      </Frame>
    </Screen>
  );
}
